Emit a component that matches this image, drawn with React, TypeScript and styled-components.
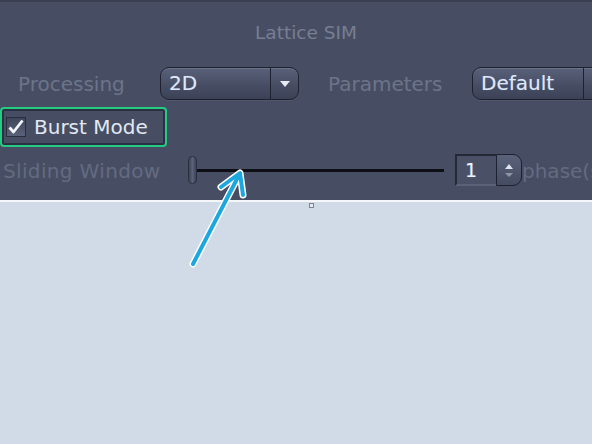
import React from "react";
import styled, { createGlobalStyle } from "styled-components";

const GlobalStyle = createGlobalStyle`
    html, body {
        margin: 0;
        padding: 0;
        background: #d1dae7;
        font-family: "DejaVu Sans", "Open Sans", sans-serif;
    }
`;

const Page = styled.div`
    position: relative;
    width: 592px;
    height: 444px;
    overflow: hidden;
    background: #d1dae7;
`;

const Panel = styled.div`
    box-sizing: border-box;
    height: 202px;
    padding-top: 19px;
    background: #474e63;
    border-top: 2px solid #3a4051;
    border-bottom: 2px solid #f4f6f9;
    display: flex;
    flex-direction: column;
`;

const Title = styled.div`
    height: 24px;
    line-height: 24px;
    text-align: center;
    padding-left: 20px;
    font-size: 18.5px;
    color: #777e92;
`;

const Row = styled.div<{ $mt: number; $h: number; $pl?: number }>`
    display: flex;
    align-items: center;
    height: ${(p) => p.$h}px;
    margin-top: ${(p) => p.$mt}px;
    padding-left: ${(p) => p.$pl ?? 0}px;
    white-space: nowrap;
`;

const Label = styled.span<{ $w: number; $dim?: boolean }>`
    flex: 0 0 auto;
    width: ${(p) => p.$w}px;
    font-size: 20px;
    padding-top: 2px;
    letter-spacing: ${(p) => (p.$dim ? "0.35px" : "0")};
    color: ${(p) => (p.$dim ? "#636b81" : "#6c748a")};
`;

const Select = styled.div<{ $w: number }>`
    flex: 0 0 auto;
    box-sizing: border-box;
    width: ${(p) => p.$w}px;
    height: 33px;
    display: flex;
    border: 1px solid #1e2230;
    border-radius: 9px;
    background: linear-gradient(#59617a, #474e64 55%, #3c4256);
    box-shadow: inset 0 1px 0 rgba(255, 255, 255, 0.12), 0 1px 0 rgba(255, 255, 255, 0.06);
    overflow: hidden;
`;

const SelectText = styled.span`
    flex: 1;
    padding-left: 8px;
    line-height: 31px;
    font-size: 20px;
    color: #dfe6f4;
    text-shadow: 0 0 1px rgba(140, 170, 230, 0.6);
`;

const SelectArrow = styled.span`
    flex: 0 0 27px;
    border-left: 1px solid #1e2230;
    display: flex;
    align-items: center;
    justify-content: center;
    &::after {
        content: "";
        border-left: 5px solid transparent;
        border-right: 5px solid transparent;
        border-top: 6px solid #e6ebf4;
        margin-top: 2px;
    }
`;

const CheckFrame = styled.label`
    box-sizing: border-box;
    height: 40px;
    width: 167px;
    display: flex;
    align-items: center;
    gap: 8px;
    padding-left: 4px;
    border: 2px solid #22cc80;
    border-radius: 4px;
    box-shadow: inset 0 0 0 2px #2b3142;
`;

const CheckBox = styled.span`
    box-sizing: border-box;
    width: 20px;
    height: 20px;
    border: 1px solid #2a2f3d;
    background: linear-gradient(#40465a, #5a627a);
    display: flex;
    align-items: center;
    justify-content: center;
`;

const CheckText = styled.span`
    font-size: 20px;
    color: #e2e8f3;
`;

const Slider = styled.div`
    flex: 0 0 auto;
    width: 256px;
    height: 30px;
    display: flex;
    align-items: center;
`;

const Handle = styled.span`
    box-sizing: border-box;
    width: 9px;
    height: 28px;
    border-radius: 5px;
    border: 1px solid #2a2f3d;
    background: linear-gradient(90deg, #3d4356, #5a627a 50%, #3d4356);
`;

const Track = styled.span`
    flex: 1;
    height: 3px;
    background: #0d0f14;
`;

const Spin = styled.div`
    flex: 0 0 auto;
    margin-left: 11px;
    display: flex;
    height: 32px;
`;

const SpinField = styled.span`
    box-sizing: border-box;
    width: 41px;
    border-top: 2px solid #242937;
    border-left: 2px solid #242937;
    border-bottom: 2px solid #5a6178;
    background: #4a5167;
    padding-left: 8px;
    line-height: 28px;
    font-size: 19px;
    color: #eef2fa;
    text-shadow: 0 0 1px rgba(140, 170, 230, 0.7);
`;

const SpinButtons = styled.span`
    box-sizing: border-box;
    width: 26px;
    border: 1px solid #1e2230;
    border-radius: 0 9px 9px 0;
    background: linear-gradient(#5a627a, #454c61);
    display: flex;
    flex-direction: column;
    align-items: center;
    justify-content: center;
    gap: 4px;
`;

const Tri = styled.span<{ $down?: boolean }>`
    width: 0;
    height: 0;
    border-left: 4px solid transparent;
    border-right: 4px solid transparent;
    ${(p) => (p.$down ? "border-top: 4px solid #8d95a8;" : "border-bottom: 5px solid #dfe4ee;")}
`;

const Unit = styled.span`
    font-size: 20px;
    padding-top: 2px;
    color: #636b81;
`;

const Dot = styled.span`
    position: absolute;
    left: 309px;
    top: 203px;
    width: 3px;
    height: 3px;
    border: 1px solid #7d8494;
    background: #e6eaf0;
`;

const Pointer = styled.svg`
    position: absolute;
    left: 0;
    top: 0;
    pointer-events: none;
`;

export default function App() {
    return (
        <>
            <GlobalStyle />
            <Page>
                <Panel>
                    <Title>Lattice SIM</Title>
                    <Row $mt={20} $h={36} $pl={18}>
                        <Label $w={142}>Processing</Label>
                        <Select $w={139}>
                            <SelectText>2D</SelectText>
                            <SelectArrow />
                        </Select>
                        <Label $w={144} style={{ marginLeft: 29 }}>
                            Parameters
                        </Label>
                        <Select $w={140}>
                            <SelectText>Default</SelectText>
                            <SelectArrow />
                        </Select>
                    </Row>
                    <Row $mt={6} $h={40}>
                        <CheckFrame>
                            <CheckBox>
                                <svg width="18" height="18" viewBox="0 0 18 18">
                                    <path
                                        d="M2.5 9.5 L6.5 14 L15.5 2.5"
                                        fill="none"
                                        stroke="#f2f5fa"
                                        strokeWidth="2.8"
                                        strokeLinejoin="round"
                                    />
                                </svg>
                            </CheckBox>
                            <CheckText>Burst Mode</CheckText>
                        </CheckFrame>
                    </Row>
                    <Row $mt={6} $h={34} $pl={3}>
                        <Label $w={185} $dim>
                            Sliding Window
                        </Label>
                        <Slider>
                            <Handle />
                            <Track />
                        </Slider>
                        <Spin>
                            <SpinField>1</SpinField>
                            <SpinButtons>
                                <Tri />
                                <Tri $down />
                            </SpinButtons>
                        </Spin>
                        <Unit>phase(s)</Unit>
                    </Row>
                </Panel>
                <Dot />
                <Pointer width="592" height="444" viewBox="0 0 592 444">
                    <g fill="none" strokeLinecap="round" strokeLinejoin="round">
                        <path d="M193 264 L238 177" stroke="#ffffff" strokeWidth="7" />
                        <path d="M221 187 L240 173 L243 195" stroke="#ffffff" strokeWidth="7" />
                        <path d="M193 264 L238 177" stroke="#1ca7df" strokeWidth="4" />
                        <path d="M221 187 L240 173 L243 195" stroke="#1ca7df" strokeWidth="4" />
                    </g>
                </Pointer>
            </Page>
        </>
    );
}
